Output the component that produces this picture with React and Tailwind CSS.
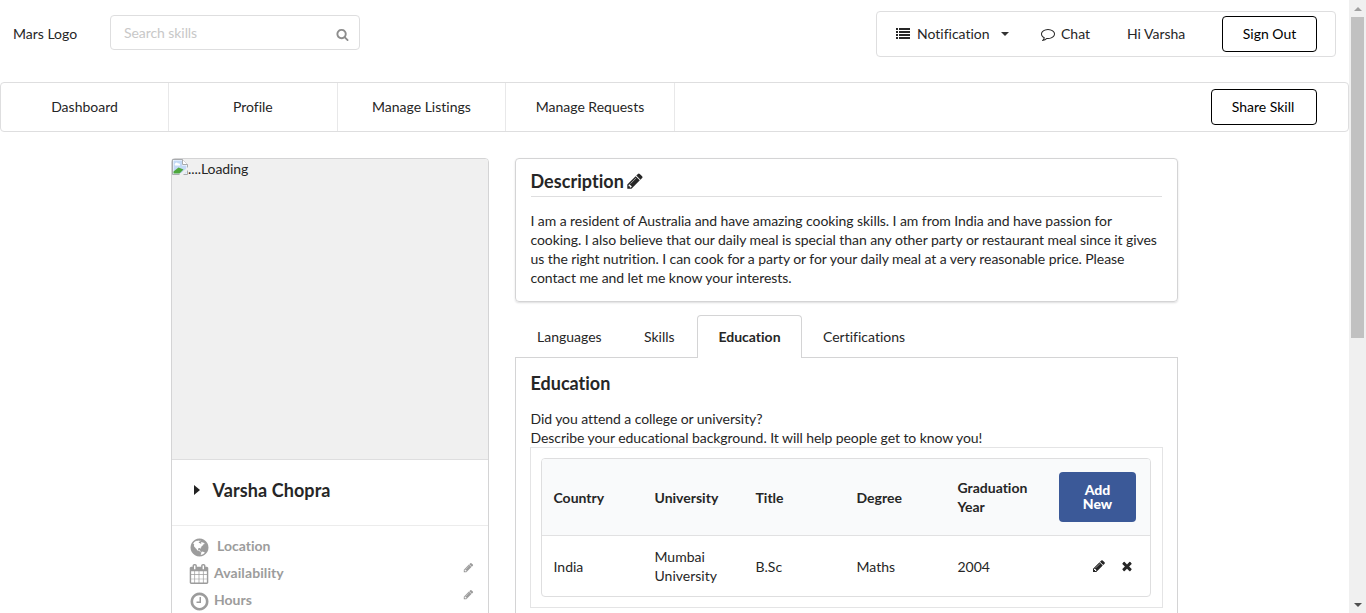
import React from "react";

const paths = {
  pencil:
    "M491 1536l91-91-235-235-91 91v107h128v128h107zm523-928q0-22-22-22-10 0-17 7l-542 542q-7 7-7 17 0 22 22 22 10 0 17-7l542-542q7-7 7-17zm-54-192l416 416-832 832h-416v-416zm683 96q0 53-37 90l-166 166-416-416 166-165q36-38 90-38 53 0 91 38l235 234q37 39 37 91z",
  search:
    "M1216 832q0-185-131.5-316.5t-316.5-131.5-316.5 131.5-131.5 316.5 131.5 316.5 316.5 131.5 316.5-131.5 131.5-316.5zm512 832q0 52-38 90t-90 38q-54 0-90-38l-343-342q-179 124-399 124-143 0-273.5-55.5t-225-150-150-225-55.5-273.5 55.5-273.5 150-225 225-150 273.5-55.5 273.5 55.5 225 150 150 225 55.5 273.5q0 220-124 399l343 343q37 37 37 90z",
  times:
    "M1490 1322q0 40-28 68l-136 136q-28 28-68 28t-68-28l-294-294-294 294q-28 28-68 28t-68-28l-136-136q-28-28-28-68t28-68l294-294-294-294q-28-28-28-68t28-68l136-136q28-28 68-28t68 28l294 294 294-294q28-28 68-28t68 28l136 136q28 28 28 68t-28 68l-294 294 294 294q28 28 28 68z",
  comment:
    "M896 384q-204 0-381.5 69.5t-282 187.5-104.5 255q0 112 71.5 213.5t201.5 175.5l87 50-27 96q-24 91-70 172 152-63 275-171l43-38 57 6q69 8 130 8 204 0 381.5-69.5t282-187.5 104.5-255-104.5-255-282-187.5-381.5-69.5zm896 512q0 174-120 321.5t-326 233-450 85.5q-70 0-145-8-198 175-460 242-49 14-114 22h-5q-15 0-27-10.5t-16-27.5v-1q-3-4-.5-12t2-10 4.5-9.5l6-9 7-8.5 8-9q7-8 31-34.5t34.5-38 31-39.5 32.5-51 27-59 26-76q-157-89-247.5-220t-90.5-281q0-130 71-248.5t191-204.5 286-136.5 348-50.5 348 50.5 286 136.5 191 204.5 71 248.5z",
  list: "M0 256h256v256H0zM384 256h1408v256H384zM0 640h256v256H0zM384 640h1408v256H384zM0 1024h256v256H0zM384 1024h1408v256H384zM0 1408h256v256H0zM384 1408h1408v256H384z",
  clock:
    "M1024 544v448q0 14-9 23t-23 9h-320q-14 0-23-9t-9-23v-64q0-14 9-23t23-9h224v-352q0-14 9-23t23-9h64q14 0 23 9t9 23zm416 352q0-148-73-273t-198-198-273-73-273 73-198 198-73 273 73 273 198 198 273 73 273-73 198-198 73-273zm224 0q0 209-103 385.5t-279.5 279.5-385.5 103-385.5-103-279.5-279.5-103-385.5 103-385.5 279.5-279.5 385.5-103 385.5 103 279.5 279.5 103 385.5z",
  calendar:
    "M192 1664h288v-288h-288v288zm352 0h320v-288h-320v288zm-352-352h288v-320h-288v320zm352 0h320v-320h-320v320zm-352-384h288v-288h-288v288zm736 736h320v-288h-320v288zm-384-736h320v-288h-320v288zm768 736h288v-288h-288v288zm-384-352h320v-320h-320v320zm-352-864v-288q0-13-9.5-22.5t-22.5-9.5h-64q-13 0-22.5 9.5t-9.5 22.5v288q0 13 9.5 22.5t22.5 9.5h64q13 0 22.5-9.5t9.5-22.5zm736 864h288v-320h-288v320zm-384-384h320v-288h-320v288zm384 0h288v-288h-288v288zm32-480v-288q0-13-9.5-22.5t-22.5-9.5h-64q-13 0-22.5 9.5t-9.5 22.5v288q0 13 9.5 22.5t22.5 9.5h64q13 0 22.5-9.5t9.5-22.5zm384-64v1280q0 52-38 90t-90 38h-1408q-52 0-90-38t-38-90v-1280q0-52 38-90t90-38h128v-96q0-66 47-113t113-47h64q66 0 113 47t47 113v96h384v-96q0-66 47-113t113-47h64q66 0 113 47t47 113v96h128q52 0 90 38t38 90z",
  globe:
    "M896 128q209 0 385.5 103t279.5 279.5 103 385.5-103 385.5-279.5 279.5-385.5 103-385.5-103-279.5-279.5-103-385.5 103-385.5 279.5-279.5 385.5-103zm274 521q-2 1-9.5 9.5t-13.5 9.5q2 0 4.5-5t5-11 3.5-7q6-7 22-15 14-6 52-12 34-8 51 11-2-2 9.5-13t14.5-12q3-2 15-4.5t15-7.5l2-22q-12 1-17.5-7t-6.5-21q0 2-6 8 0-7-4.5-8t-11.5 1-9 1q-10-3-15-7.5t-8-16.5-4-15q-2-5-9.5-11t-9.5-10q-1-2-2.5-5.5t-3-6.5-4-5.5-5.5-2.5-7 5-7.5 10-4.5 5q-3-2-6-1.5t-4.5 1-4.5 3-5 3.5q-3 2-8.5 3t-8.5 2q15-5-1-11-10-4-16-3 9-4 7.5-12t-8.5-14h5q-1-4-8.5-8.5t-17.5-8.5-13-6q-8-5-34-9.5t-33-.5q-5 6-4.5 10.5t4 14 3.5 12.5q1 6-5.5 13t-6.5 12q0 7 14 15.5t10 21.5q-3 8-16 16t-16 12q-5 8-1.5 18.5t10.5 16.5q2 2 1.5 4t-3.5 4.5-5.5 4-6.5 3.5l-3 2q-11 5-20.5-6t-13.5-26q-7-25-16-30-23-8-29 1-5-13-41-26-25-9-58-4 6-1 0-15-7-15-19-12 3-6 4-17.5t1-13.5q3-13 12-23 1-1 7-8.5t9.5-13.5.5-6q35 4 50-11 5-5 11.5-17t10.5-17q9-6 14-5.5t14.5 5.5 14.5 5q14 1 15.5-11t-7.5-20q12 1 3-17-4-7-8-9-12-4-27 5-8 4 2 8-1-1-9.5 10.5t-16.5 17.5-16-5q-1-1-5.5-13.5t-9.5-13.5q-8 0-16 15 3-8-11-15t-24-8q19-12-8-27-7-4-20.5-5t-19.5 4q-5 7-5.5 11.5t5 8 10.5 5.5 11.5 4 8.5 3q14 10 8 14-2 1-8.5 3.5t-11.5 4.5-6 4q-3 4 0 14t-2 14q-5-5-9-17.5t-7-16.5q7 9-25 6l-10-1q-4 0-16 2t-20.5 1-13.5-8q-4-8 0-20 1-4 4-2-4-3-11-9.5t-10-8.5q-46 15-94 41 6 1 12-1 5-2 13-6.5t10-5.5q34-14 42-7l5-5q14 16 20 25-7-4-30-1-20 6-22 12 7 12 5 18-4-3-11.5-10t-14.5-11-15-5q-16 0-22 1-146 80-235 222 7 7 12 8 4 1 5 9t2.5 11 11.5-3q9 8 3 19 1-1 44 27 19 17 21 21 3 11-10 18-1-2-9-9t-9-4q-3 5 .5 18.5t10.5 12.5q-7 0-9.5 16t-2.5 35.5-1 23.5l2 1q-3 12 5.5 34.5t21.5 19.5q-13 3 20 43 6 8 8 9 3 2 12 7.5t15 10 10 10.5q4 5 10 22.5t14 23.5q-2 6 9.5 20t10.5 23q-1 0-2.5 1t-2.5 1q3 7 15.5 14t15.5 13q1 3 2 10t3 11 8 2q2-20-24-62-15-25-17-29-3-5-5.5-15.5t-4.5-14.5q2 0 6 1.5t8.5 3.5 7.5 4 2 3q-3 7 2 17.5t12 18.5 17 19 12 13q6 6 14 19.5t0 13.5q9 0 20 10t17 20q5 8 8 26t5 24q2 7 8.5 13.5t12.5 9.5l16 8 13 7q5 2 18.5 10.5t21.5 11.5q10 4 16 4t14.5-2.5 13.5-3.5q15-2 29 15t21 21q36 19 55 11-2 1 .5 7.5t8 15.5 9 14.5 5.5 8.5q5 6 18 15t18 15q6-4 7-9-3 8 7 20t18 10q14-3 14-32-31 15-49-18 0-1-2.5-5.5t-4-8.5-2.5-8.5 0-7.5 5-3q9 0 10-3.5t-2-12.5-4-13q-1-8-11-20t-12-15q-5 9-16 8t-16-9q0 1-1.5 5.5t-1.5 6.5q-13 0-15-1 1-3 2.5-17.5t3.5-22.5q1-4 5.5-12t7.5-14.5 4-12.5-4.5-9.5-17.5-2.5q-19 1-26 20-1 3-3 10.5t-5 11.5-9 7q-7 3-24 2t-24-5q-13-8-22.5-29t-9.5-37q0-10 2.5-26.5t3-25-5.5-24.5q3-2 9-9.5t10-10.5q2-1 4.5-1.5t4.5 0 4-1.5 3-6q-1-1-4-3-3-3-4-3 7 3 28.5-1.5t27.5 1.5q15 11 22-2 0-1-2.5-9.5t-.5-13.5q5 27 29 9 3 3 15.5 5t17.5 5q3 2 7 5.5t5.5 4.5 5-.5 8.5-6.5q10 14 12 24 11 40 19 44 7 3 11 2t4.5-9.5 0-14-1.5-12.5l-1-8v-18l-1-8q-15-3-18.5-12t1.5-18.5 15-18.5q1-1 8-3.5t15.5-6.5 12.5-8q21-19 15-35 7 0 11-9-1 0-5-3t-7.5-5-4.5-2q9-5 2-16 5-3 7.5-11t7.5-10q9 12 21 2 8-8 1-16 5-7 20.5-10.5t18.5-9.5q7 2 8-2t1-12 3-12q4-5 15-9t13-5l17-11q3-4 0-4 18 2 31-11 10-11-6-20 3-6-3-9.5t-15-5.5q3-1 11.5-.5t10.5-1.5q15-10-7-16-17-5-43 12zm-163 877q206-36 351-189-3-3-12.5-4.5t-12.5-3.5q-18-7-24-8 1-7-2.5-13t-8-9-12.5-8-11-7q-2-2-7-6t-7-5.5-7.5-4.5-8.5-2-10 1l-3 1q-3 1-5.5 2.5t-5.5 3-4 3 0 2.5q-21-17-36-22-5-1-11-5.5t-10.5-7-10-1.5-11.5 7q-5 5-6 15t-2 13q-7-5 0-17.5t2-18.5q-3-6-10.5-4.5t-12 4.5-11.5 8.5-9 6.5-8.5 5.5-8.5 7.5q-3 4-6 12t-5 11q-2-4-11.5-6.5t-9.5-5.5q2 10 4 35t5 38q7 31-12 48-27 25-29 40-4 22 12 26 0 7-8 20.5t-7 21.5q0 6 2 16z",
};

function Icon({ name, className }) {
  return (
    <svg viewBox="0 0 1792 1792" fill="currentColor" className={`shrink-0 ${className}`}>
      <path d={paths[name]} />
    </svg>
  );
}

function BrokenImage() {
  return (
    <svg viewBox="0 0 16 16" className="h-4 w-4 shrink-0">
      <path d="M.5.5h10l5 5v10H.5z" fill="#fff" stroke="#a9abae" />
      <path d="M1.5 1.5h8.500v5h4.500v8H1.500z" fill="#c3d9f5" />
      <path d="M3 6.500h5v-1a1.300 1.300 0 0 0-2-1 1.700 1.700 0 0 0-3 2z" fill="#fff" />
      <path d="M1.500 14.500v-2l5-4 5 2-4 4z" fill="#4fa83d" />
      <path d="M10.500.5v5h5" fill="#fff" stroke="#a9abae" />
      <path d="M7 16l9-8v3l-5 5z" fill="#f0f0f0" />
    </svg>
  );
}

function Header() {
  return (
    <header className="flex h-[82px] items-start">
      <div className="w-[110px] pt-[24px] pl-[13px]">Mars Logo</div>
      <div className="mt-[15px] flex h-[35px] w-[250px] items-center justify-between rounded-[4px] border border-[#dededf] pr-[10px] pl-[13px]">
        <span className="pb-[1px] tracking-[-0.07px] text-[#c8c8c8]">Search skills</span>
        <Icon name="search" className="mt-[3px] h-[13px] w-[13px] text-[#8d8d8d]" />
      </div>
      <div className="mt-[11px] mr-[13px] ml-auto flex h-[46px] w-[460px] items-center rounded-[4px] border border-[#dededf] pl-[19px]">
        <Icon name="list" className="mr-[7px] mb-[2px] h-[14px] w-[14px]" />
        <span className="w-[84px] pb-[2px]">Notification</span>
        <span className="h-0 w-0 border-x-4 border-t-4 border-x-transparent border-t-[#333]" />
        <Icon name="comment" className="mr-[6px] mb-[1px] ml-[32px] h-[14px] w-[14px]" />
        <span className="w-[66px] pb-[2px]">Chat</span>
        <span className="w-[95px] pb-[2px]">Hi Varsha</span>
        <button className="h-[36px] w-[95px] rounded-[4px] border border-black pb-[2px] text-black">Sign Out</button>
      </div>
    </header>
  );
}

const menu = ["Dashboard", "Profile", "Manage Listings", "Manage Requests"];

function Nav() {
  return (
    <nav className="flex h-[50px] items-center rounded-[4px] border border-[#dededf] pr-[31px]">
      {menu.map((m) => (
        <div
          key={m}
          className="flex h-full w-[168.6px] items-center justify-center border-r border-[#e8e8e9] pb-[2px] first:w-[168px]"
        >
          {m}
        </div>
      ))}
      <button className="ml-auto h-[36px] w-[106px] rounded-[4px] border border-black pr-[2px] pb-[2px] text-black">
        Share Skill
      </button>
    </nav>
  );
}

function ProfileCard() {
  return (
    <aside className="flex h-[480px] w-[318px] flex-col rounded-[4px] border border-[#d4d4d5]">
      <div className="flex h-[300px] items-start rounded-t-[3px] bg-[#f0f0f0]">
        <BrokenImage />
        <span className="tracking-[-0.07px]">....Loading</span>
      </div>
      <div className="flex h-[67px] items-center border-y border-t-[#dededf] border-b-[#ececec] pb-[5px] pl-[22px]">
        <span className="mr-[12.500px] h-0 w-0 border-y-[5.5px] border-l-[6px] border-y-transparent border-l-[#222]" />
        <h2 className="text-[18px] leading-[24px] font-bold tracking-[0.09px]">Varsha Chopra</h2>
      </div>
      <div className="flex flex-col pt-[6px] pr-[14px] pl-[17px] font-bold text-[#9c9c9c]">
        <div className="flex h-[27px] items-center">
          <Icon name="globe" className="mt-[3px] mr-[7px] h-[21px] w-[21px]" />
          Location
        </div>
        <div className="flex h-[27px] items-center">
          <Icon name="calendar" className="mt-[2px] mr-[5px] h-[20px] w-[20px]" />
          <span className="tracking-[0.09px]">Availability</span>
          <Icon name="pencil" className="mb-[10px] ml-auto h-[11px] w-[11px]" />
        </div>
        <div className="flex h-[27px] items-center">
          <Icon name="clock" className="mt-[3px] mr-[4px] h-[21px] w-[21px]" />
          Hours
          <Icon name="pencil" className="mb-[10px] ml-auto h-[11px] w-[11px]" />
        </div>
      </div>
    </aside>
  );
}

function Description() {
  return (
    <section className="h-[144px] rounded-[4px] border border-[#d4d4d5] pr-[15px] pl-[14.500px] shadow-[0_1px_2px_0_rgba(34,36,38,0.15)]">
      <div className="flex h-[38px] items-center border-b border-[#dededf] pt-[7px]">
        <h2 className="text-[18px] leading-[24px] font-bold tracking-[0.04px]">Description</h2>
        <Icon name="pencil" className="ml-[2px] h-[18px] w-[18px]" />
      </div>
      <p className="pt-[14px] leading-[19px] tracking-[-0.07px] whitespace-nowrap">
        I am a resident of Australia and have amazing cooking skills. I am from India and have passion for
        <br />
        cooking. I also believe that our daily meal is special than any other party or restaurant meal since it gives
        <br />
        us the right nutrition. I can cook for a party or for your daily meal at a very reasonable price. Please
        <br />
        contact me and let me know your interests.
      </p>
    </section>
  );
}

function Tabs() {
  return (
    <div className="mt-[13px] flex h-[43px]">
      <div className="w-[182px] border-b border-[#d4d4d5]">
        <div className="flex pt-[12px] pl-[22px]">
          <span className="w-[107px]">Languages</span>
          <span>Skills</span>
        </div>
      </div>
      <div className="w-[105px] rounded-t-[4px] border border-b-0 border-[#d4d4d5] pt-[11px] text-center font-bold">
        Education
      </div>
      <div className="flex-1 border-b border-[#d4d4d5] pt-[12px] pl-[21px]">Certifications</div>
    </div>
  );
}

function Education() {
  return (
    <section className="h-[300px] border border-t-0 border-[#d4d4d5] pr-[15px] pl-[14.500px] pt-[13px]">
      <h2 className="text-[18px] leading-[24px] font-bold">Education</h2>
      <p className="pt-[14px] leading-[19px] tracking-[-0.07px]">
        Did you attend a college or university?
        <br />
        Describe your educational background. It will help people get to know you!
      </p>
      <div className="-mr-px -ml-[0.500px] h-[161px] border border-[#e4e4e5] p-[10px] pr-[11px]">
        <div className="grid h-[139px] grid-cols-[101px_101px_101px_101px_101px_1fr] grid-rows-[77px_60px] overflow-hidden rounded-[4px] border border-[#dededf]">
          {["Country", "University", "Title", "Degree", "Graduation Year"].map((h) => (
            <div
              key={h}
              className="flex items-center border-b border-[#e1e1e2] bg-[#f9fafb] pr-[11px] pl-[11.500px] leading-[19px] font-bold"
            >
              {h}
            </div>
          ))}
          <div className="flex items-center border-b border-[#e1e1e2] bg-[#f9fafb] pl-[12px]">
            <button className="h-[50px] w-[77px] rounded-[4px] bg-[#3b5998] px-[20px] leading-[14px] font-black text-white">
              Add New
            </button>
          </div>
          {["India", "Mumbai University", "B.Sc", "Maths", "2004"].map((c) => (
            <div key={c} className="flex items-center pr-[11px] pl-[11.500px] leading-[19px]">
              {c}
            </div>
          ))}
          <div className="flex items-center pl-[45px]">
            <Icon name="pencil" className="h-[14px] w-[14px]" />
            <Icon name="times" className="ml-[14px] h-[14px] w-[14px]" />
          </div>
        </div>
      </div>
    </section>
  );
}

function Scrollbar() {
  return (
    <div className="flex h-full w-[17px] flex-col items-center bg-[#f0f0f0]">
      <div className="flex h-[17px] items-center">
        <span className="h-0 w-0 border-x-4 border-b-4 border-x-transparent border-b-[#a0a0a0]" />
      </div>
      <div className="h-[321px] w-[13px] bg-[#c1c1c1]" />
      <div className="mt-auto flex h-[17px] items-center">
        <span className="h-0 w-0 border-x-4 border-t-4 border-x-transparent border-t-[#505050]" />
      </div>
    </div>
  );
}

export default function App() {
  return (
    <div className="flex h-[613px] w-[1366px] overflow-hidden bg-white font-['Lato',sans-serif] text-[14px] leading-[19px] text-[#262626] [font-variant-ligatures:none]">
      <div className="h-full w-[1349px] overflow-hidden">
        <Header />
        <Nav />
        <main className="flex gap-[26px] pt-[26px] pl-[171px]">
          <ProfileCard />
          <div className="w-[663px]">
            <Description />
            <Tabs />
            <Education />
          </div>
        </main>
      </div>
      <Scrollbar />
    </div>
  );
}
